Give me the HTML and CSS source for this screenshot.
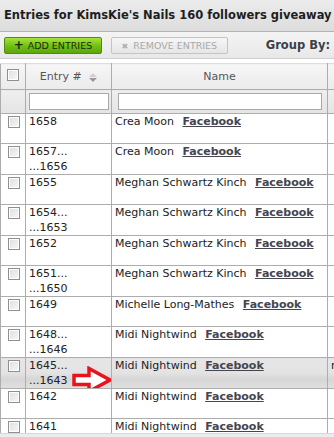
FILE: index.html
```html
<!DOCTYPE html>
<html lang="en">
<head>
    <meta charset="UTF-8">
    <meta name="viewport" content="width=device-width, initial-scale=1.0">
    <title>Entries</title>
    <link rel="stylesheet" href="styles.css">
</head>
<body>
    <div class="page">
        <div class="title-bar">Entries for KimsKie's Nails 160 followers giveaway</div>

        <div class="toolbar">
            <button class="btn btn-add"><b>+</b> ADD ENTRIES</button>
            <button class="btn btn-remove" disabled><span class="x">&#10006;</span> REMOVE ENTRIES</button>
            <span class="group-by">Group By:</span>
        </div>

        <table class="entries">
            <colgroup>
                <col class="c-check">
                <col class="c-entry">
                <col class="c-name">
                <col class="c-extra">
            </colgroup>
            <thead>
                <tr class="head-row">
                    <th><span class="check"></span></th>
                    <th>Entry # <span class="sort"><i class="up"></i><i class="down"></i></span></th>
                    <th>Name</th>
                    <th></th>
                </tr>
                <tr class="filter-row">
                    <th></th>
                    <th><input type="text" class="filter filter-entry"></th>
                    <th><input type="text" class="filter filter-name"></th>
                    <th></th>
                </tr>
            </thead>
            <tbody>
                <tr>
                    <td><span class="check"></span></td>
                    <td>1658</td>
                    <td>Crea Moon <a href="#" class="fb">Facebook</a></td>
                    <td></td>
                </tr>
                <tr>
                    <td><span class="check"></span></td>
                    <td>1657...<br>...1656</td>
                    <td>Crea Moon <a href="#" class="fb">Facebook</a></td>
                    <td></td>
                </tr>
                <tr>
                    <td><span class="check"></span></td>
                    <td>1655</td>
                    <td>Meghan Schwartz Kinch <a href="#" class="fb">Facebook</a></td>
                    <td></td>
                </tr>
                <tr>
                    <td><span class="check"></span></td>
                    <td>1654...<br>...1653</td>
                    <td>Meghan Schwartz Kinch <a href="#" class="fb">Facebook</a></td>
                    <td></td>
                </tr>
                <tr>
                    <td><span class="check"></span></td>
                    <td>1652</td>
                    <td>Meghan Schwartz Kinch <a href="#" class="fb">Facebook</a></td>
                    <td></td>
                </tr>
                <tr>
                    <td><span class="check"></span></td>
                    <td>1651...<br>...1650</td>
                    <td>Meghan Schwartz Kinch <a href="#" class="fb">Facebook</a></td>
                    <td></td>
                </tr>
                <tr>
                    <td><span class="check"></span></td>
                    <td>1649</td>
                    <td>Michelle Long-Mathes <a href="#" class="fb">Facebook</a></td>
                    <td></td>
                </tr>
                <tr>
                    <td><span class="check"></span></td>
                    <td>1648...<br>...1646</td>
                    <td>Midi Nightwind <a href="#" class="fb">Facebook</a></td>
                    <td></td>
                </tr>
                <tr class="hover">
                    <td><span class="check"></span></td>
                    <td class="with-arrow">1645...<br>...1643
                        <svg class="arrow" width="41" height="28" viewBox="0 0 41 28">
                            <path d="M2 9.5 H17 V2.5 L38 14 L17 25.5 V18.5 H2 Z" fill="#fff" stroke="#e8141c" stroke-width="3.5" stroke-linejoin="miter"/>
                        </svg>
                    </td>
                    <td>Midi Nightwind <a href="#" class="fb">Facebook</a></td>
                    <td>r</td>
                </tr>
                <tr>
                    <td><span class="check"></span></td>
                    <td>1642</td>
                    <td>Midi Nightwind <a href="#" class="fb">Facebook</a></td>
                    <td></td>
                </tr>
                <tr>
                    <td><span class="check"></span></td>
                    <td>1641</td>
                    <td>Midi Nightwind <a href="#" class="fb">Facebook</a></td>
                    <td></td>
                </tr>
            </tbody>
        </table>
    </div>
    <div class="scrollbar"></div>
</body>
</html>
```

FILE: styles.css
```css
body {
    margin: 0;
    width: 334px;
    overflow: hidden;
    font-family: "DejaVu Sans", Verdana, sans-serif;
    font-size: 11px;
    color: #222;
    background: #fff;
}

.page {
    height: 433px;
    overflow: hidden;
}

.title-bar {
    height: 31px;
    line-height: 31px;
    padding-left: 4px;
    white-space: nowrap;
    font-size: 11.5px;
    font-weight: bold;
    color: #1e1e1e;
    background: linear-gradient(#ececec, #dcdcdc);
    border-bottom: 1px solid #b4b4b4;
}

.toolbar {
    display: flex;
    align-items: center;
    height: 26px;
    padding: 0 4px;
    background: linear-gradient(#f4f4f4, #e8e8e8);
    border-bottom: 1px solid #d0d0d0;
    white-space: nowrap;
}

.btn {
    height: 17px;
    padding: 0 6px;
    font-family: "DejaVu Sans", Verdana, sans-serif;
    font-size: 9.5px;
    line-height: 15px;
    border-radius: 2px;
}

.btn-add {
    width: 98px;
    color: #1c2a06;
    border: 1px solid #4f8b0e;
    background: linear-gradient(#a6e43a, #6fbf12 55%, #5aa80a);
}

.btn-add b {
    font-size: 12px;
    margin-right: 1px;
}

.btn-remove {
    width: 117px;
    margin-left: 9px;
    color: #a8a8a8;
    border: 1px solid #c4c4c4;
    background: linear-gradient(#f6f6f6, #e6e6e6);
}

.btn-remove .x {
    font-size: 8px;
    color: #b0b0b0;
    margin-right: 2px;
}

.group-by {
    margin-left: 38px;
    font-weight: bold;
    font-size: 11.5px;
    color: #3a3f4a;
}

.entries {
    margin-top: 4px;
    width: 420px;
    table-layout: fixed;
    border-collapse: collapse;
}

.c-check { width: 25px; }
.c-entry { width: 86px; }
.c-name  { width: 216px; }
.c-extra { width: 93px; }

.entries th,
.entries td {
    border: 1px solid #adadad;
    overflow: hidden;
    white-space: nowrap;
}

.head-row th {
    height: 23px;
    font-weight: normal;
    color: #555;
    font-size: 11px;
    border-top-color: #dcdcdc;
    background: linear-gradient(#f6f6f6, #ebebeb);
}

.filter-row th {
    height: 23px;
    padding: 0 3px;
    background: linear-gradient(#efefef, #e4e4e4);
    text-align: left;
}

.filter {
    display: block;
    box-sizing: border-box;
    height: 17px;
    border: 1px solid #a8a8a8;
    background: #fff;
    padding: 0;
}

.filter-entry { width: 80px; }
.filter-name { width: 204px; margin-left: 3px; }

.sort {
    display: inline-block;
    vertical-align: middle;
    margin-left: 4px;
    width: 8px;
}

.sort i {
    display: block;
    width: 0;
    height: 0;
    border-left: 4px solid transparent;
    border-right: 4px solid transparent;
}

.sort .up {
    border-bottom: 4px solid #d0d0d0;
    margin-bottom: 1px;
}

.sort .down {
    border-top: 4px solid #999;
}

.check {
    display: inline-block;
    box-sizing: border-box;
    width: 12px;
    height: 12px;
    border: 1px solid #8f8f8f;
    background: linear-gradient(135deg, #dedede, #f8f8f8);
    box-shadow: inset 0 0 0 1px #fff;
}

.entries td {
    height: 30px;
    box-sizing: border-box;
    vertical-align: top;
    line-height: 15px;
    padding: 0 3px;
    font-size: 11px;
    color: #222;
}

.entries td:first-child {
    padding: 2px 0 0 7px;
    line-height: 12px;
}

.head-row th:first-child {
    padding-top: 1px;
    line-height: 12px;
}

.fb {
    margin-left: 5px;
    color: #454550;
    font-weight: bold;
    text-decoration: underline;
}

.hover td {
    background: linear-gradient(#e6e6e6, #e3e3e3 48%, #d6d6d6 70%, #e0e0e0);
}

.with-arrow {
    position: relative;
    overflow: visible;
}

.arrow {
    position: absolute;
    left: 46px;
    top: 8px;
}

.scrollbar {
    height: 4px;
    background: #ececec;
    border-top: 1px solid #d8d8d8;
}
```
